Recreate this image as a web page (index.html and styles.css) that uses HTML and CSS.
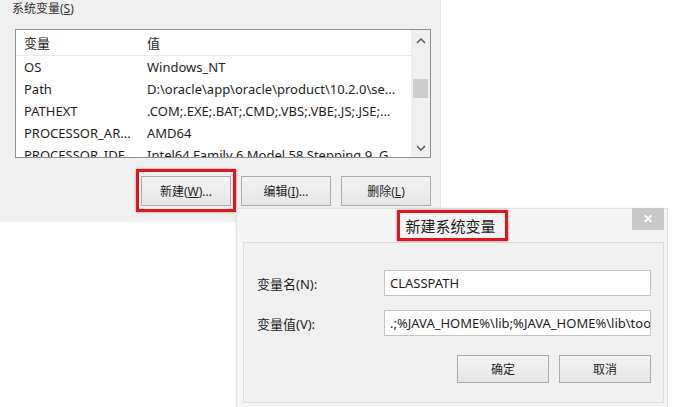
FILE: index.html
```html
<!DOCTYPE html>
<html lang="zh-CN">
<head>
  <meta charset="UTF-8" />
  <title>系统变量</title>
  <link rel="stylesheet" href="styles.css">
</head>
<body>

<div class="desk">
  <section class="sysvars">
    <div class="group-title">系统变量(<u>S</u>)</div>

    <div class="listbox">
      <div class="list">
        <div class="list-head">
          <span class="col-name">变量</span>
          <span class="col-val">值</span>
        </div>
        <div class="row"><span class="col-name">OS</span><span class="col-val">Windows_NT</span></div>
        <div class="row"><span class="col-name">Path</span><span class="col-val">D:\oracle\app\oracle\product\10.2.0\se...</span></div>
        <div class="row"><span class="col-name">PATHEXT</span><span class="col-val">.COM;.EXE;.BAT;.CMD;.VBS;.VBE;.JS;.JSE;...</span></div>
        <div class="row"><span class="col-name">PROCESSOR_AR...</span><span class="col-val">AMD64</span></div>
        <div class="row"><span class="col-name">PROCESSOR_IDE...</span><span class="col-val">Intel64 Family 6 Model 58 Stepping 9, G...</span></div>
      </div>
      <div class="scrollbar">
        <svg class="arrow" width="10" height="6" viewBox="0 0 10 6"><path d="M1 5 L5 1 L9 5" fill="none" stroke="#606060" stroke-width="1.6"/></svg>
        <div class="track"><div class="thumb"></div></div>
        <svg class="arrow" width="10" height="6" viewBox="0 0 10 6"><path d="M1 1 L5 5 L9 1" fill="none" stroke="#606060" stroke-width="1.6"/></svg>
      </div>
    </div>

    <div class="btn-row">
      <button class="btn marked">新建(<u>W</u>)...</button>
      <button class="btn">编辑(<u>I</u>)...</button>
      <button class="btn">删除(<u>L</u>)</button>
    </div>
  </section>

  <div class="dialog">
    <div class="dialog-bar">
      <span class="dialog-title marked-title">新建系统变量</span>
      <span class="close">&#x2715;</span>
    </div>
    <div class="dialog-body">
      <div class="form">
        <label>变量名(N):</label>
        <div class="field">CLASSPATH</div>
        <label>变量值(V):</label>
        <div class="field">.;%JAVA_HOME%\lib;%JAVA_HOME%\lib\tools.jar</div>
      </div>
      <div class="dialog-actions">
        <button class="btn btn-wide">确定</button>
        <button class="btn btn-wide">取消</button>
      </div>
    </div>
  </div>
</div>

</body>
</html>
```

FILE: styles.css
```css
* {
  box-sizing: border-box;
}

body {
  margin: 0;
  background: #ffffff;
  font-family: 'Noto Sans', 'Noto Sans CJK SC', sans-serif;
  font-size: 13px;
  color: #1e1e1e;
}

.desk {
  position: relative;
  width: 673px;
  height: 407px;
  overflow: hidden;
}

/* ---- panel behind ---- */

.sysvars {
  width: 441px;
  height: 222px;
  background: #f0f0f0;
  border-right: 1px solid #e6e6e6;
  padding: 0 10px 0 15px;
}

.group-title {
  height: 29px;
  margin-left: -3px;
  font-size: 12px;
  line-height: 18px;
  color: #333;
}

.group-title u {
  text-decoration: underline;
}

.listbox {
  display: flex;
  height: 129px;
  width: 416px;
  background: #fff;
  border: 1px solid #8f8f8f;
  overflow: hidden;
}

.list {
  flex: 1;
  overflow: hidden;
}

.list-head,
.row {
  display: flex;
  white-space: nowrap;
}

.list-head {
  height: 26px;
  line-height: 27px;
  border-bottom: 1px solid #e8e8e8;
}

.row {
  height: 22px;
  line-height: 22px;
}

.col-name {
  width: 123px;
  padding-left: 8px;
  flex: none;
}

.col-val {
  padding-left: 8px;
}

.scrollbar {
  width: 19px;
  flex: none;
  background: #f0f0f0;
  display: flex;
  flex-direction: column;
  align-items: center;
  padding: 8px 0 6px;
}

.track {
  flex: 1;
  width: 100%;
  padding: 35px 2px 0;
}

.thumb {
  height: 19px;
  background: #cdcdcd;
}

.btn-row {
  display: flex;
  justify-content: flex-end;
  gap: 10px;
  width: 416px;
  margin-top: 18px;
}

.btn {
  width: 90px;
  height: 30px;
  font-family: 'Noto Sans', 'Noto Sans CJK SC', sans-serif;
  font-size: 12px;
  color: #1e1e1e;
  background: linear-gradient(#f2f2f2, #e6e6e6);
  border: 1px solid #acacac;
  padding: 0;
}

.btn u {
  text-decoration: underline;
}

.marked {
  position: relative;
}

.marked::after {
  content: '';
  position: absolute;
  left: -6px;
  right: -6px;
  top: -8px;
  bottom: -7px;
  border: 3px solid #e0161e;
  box-shadow: 0 0 2px rgba(160, 0, 0, 0.5);
}

/* ---- dialog on top ---- */

.dialog {
  position: absolute;
  left: 236px;
  top: 208px;
  width: 432px;
  height: 199px;
  background: #f4f4f4;
  border: 1px solid #e2e2e2;
  border-bottom: none;
  padding: 0 3px 5px 6px;
  box-shadow: -1px 0 3px rgba(0, 0, 0, 0.06);
}

.dialog-bar {
  position: relative;
  height: 33px;
  display: flex;
  justify-content: center;
  align-items: center;
}

.dialog-title {
  font-size: 15px;
  color: #222;
  position: relative;
  left: -3px;
  padding: 0 6px;
  line-height: 28px;
}

.marked-title::after {
  content: '';
  position: absolute;
  left: -2px;
  right: -6px;
  top: -2px;
  bottom: -1px;
  border: 3px solid #e0161e;
  box-shadow: 0 0 2px rgba(160, 0, 0, 0.5);
}

.close {
  position: absolute;
  right: 0;
  top: -1px;
  width: 32px;
  height: 22px;
  background: #c8c8c8;
  color: #fff;
  font-size: 12px;
  font-weight: bold;
  line-height: 22px;
  text-align: center;
}

.dialog-body {
  height: 161px;
  background: #f0f0f0;
  border: 1px solid #dcdcdc;
  padding: 27px 12px 0 13px;
}

.form {
  display: grid;
  grid-template-columns: 127px 1fr;
  row-gap: 14px;
  align-items: center;
}

.form label {
  font-size: 13px;
}

.field {
  height: 26px;
  background: #fff;
  border: 1px solid #c4c4c4;
  padding-left: 5px;
  line-height: 24px;
  white-space: nowrap;
  overflow: hidden;
}

.dialog-actions {
  display: flex;
  justify-content: flex-end;
  gap: 10px;
  margin-top: 19px;
}

.btn-wide {
  width: 92px;
  height: 28px;
}
```
